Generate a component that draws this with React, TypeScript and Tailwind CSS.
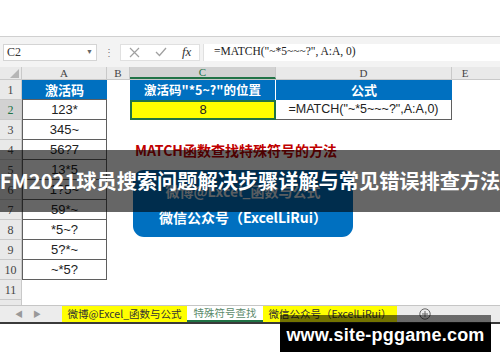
import React from "react";

const sans = "font-['Liberation_Sans','Noto_Sans_CJK_SC',sans-serif]";
const serif = "font-['Liberation_Serif','Noto_Sans_CJK_SC',serif]";
const cjk = "font-['Noto_Sans_CJK_SC','Liberation_Sans',sans-serif]";

const aVals = ["123*", "345~", "56?7", "13*5", "1?5~", "59*~", "*5~?", "5?*~", "~*5?"];

function RowHead({ n, active }: { n: string; active?: boolean }) {
  return (
    <div
      className={`w-[22px] shrink-0 h-full flex items-center justify-center border-r border-b border-[#c9c9c9] text-[12px] ${serif} ${
        active ? "bg-[#d2d2d2] text-[#217346]" : "bg-[#e9e9e9] text-[#444]"
      }`}
    >
      {n}
    </div>
  );
}

export default function App() {
  return (
    <div className={`relative w-[500px] h-[362px] overflow-hidden bg-white ${sans}`}>
      <div className="h-[36px] bg-white" />
      {/* formula bar */}
      <div className="h-[31px] bg-[#f3f3f3] border-t border-[#d0d0d0] flex items-center">
        <div className={`ml-[3px] w-[94px] h-[17px] bg-white border border-[#d4d4d4] flex items-center justify-between px-[3px] text-[12px] text-[#333] ${serif}`}>
          <span>C2</span>
          <span className="text-[7px] text-[#666]">▼</span>
        </div>
        <div className="w-[23px] text-center text-[10px] text-[#777]">⋮</div>
        <div className="w-[80px] h-[17px] bg-white border border-[#e0e0e0] flex items-center justify-around">
          <svg width="11" height="11" viewBox="0 0 11 11"><path d="M1 1L10 10M10 1L1 10" stroke="#a0a0a0" strokeWidth="1.2" fill="none" /></svg>
          <svg width="12" height="10" viewBox="0 0 12 10"><path d="M1 5L4.5 8.5L11 1" stroke="#a0a0a0" strokeWidth="1.3" fill="none" /></svg>
          <span className={`italic text-[13px] text-[#333] ${serif}`}>fx</span>
        </div>
        <div className={`ml-[3px] flex-1 h-[17px] bg-white border-l border-[#e0e0e0] flex items-center pl-[10px] text-[11.5px] text-[#222] ${serif}`}>
          =MATCH("~*5~~~?", A:A, 0)
        </div>
      </div>
      {/* column headers */}
      <div className={`flex h-[13px] bg-[#e9e9e9] text-[11px] text-[#444] ${serif} border-b border-[#c9c9c9]`}>
        <div className="w-[22px] shrink-0 border-r border-[#c9c9c9] flex items-end justify-end pr-[2px] pb-[1px]">
          <svg width="9" height="9" viewBox="0 0 9 9"><path d="M9 0V9H0Z" fill="#b5b5b5" /></svg>
        </div>
        <div className="w-[85px] shrink-0 border-r border-[#c9c9c9] flex items-center justify-center leading-none">A</div>
        <div className="w-[23px] shrink-0 border-r border-[#c9c9c9] flex items-center justify-center leading-none">B</div>
        <div className="w-[146px] shrink-0 border-r border-[#c9c9c9] bg-[#d2d2d2] text-[#217346] flex items-center justify-center leading-none border-b-2 border-b-[#217346]">C</div>
        <div className="w-[176px] shrink-0 border-r border-[#c9c9c9] flex items-center justify-center leading-none">D</div>
        <div className="flex-1 flex items-center justify-center leading-none pr-[22px]">E</div>
      </div>
      {/* row 1 */}
      <div className="flex h-[20px]">
        <RowHead n="1" />
        <div className={`w-[85px] shrink-0 bg-[#0070c0] text-white font-bold text-[13px] flex items-center justify-center ${cjk} border-b border-[#5f5f5f]`}>激活码</div>
        <div className="w-[23px] shrink-0" />
        <div className={`w-[146px] shrink-0 bg-[#0070c0] text-white font-bold text-[12.5px] flex items-center justify-center ${cjk} border-r border-white`}>激活码"*5~?"的位置</div>
        <div className={`w-[176px] shrink-0 bg-[#0070c0] text-white font-bold text-[13px] flex items-center justify-center ${cjk}`}>公式</div>
        <div className="flex-1" />
      </div>
      {/* row 2 */}
      <div className="flex h-[20px]">
        <RowHead n="2" active />
        <div className={`w-[85px] shrink-0 border-x border-b border-[#5f5f5f] text-[13px] text-[#222] flex items-center justify-center ${sans}`}>{aVals[0]}</div>
        <div className="w-[23px] shrink-0" />
        <div className="w-[146px] shrink-0 bg-[#ffff00] border-2 border-[#217346] text-[13px] text-[#222] flex items-center justify-center">8</div>
        <div className="w-[176px] shrink-0 border-r border-b border-[#5f5f5f] text-[12.5px] text-[#222] flex items-center justify-center">=MATCH("~*5~~~?",A:A,0)</div>
        <div className="flex-1" />
      </div>
      {/* rows 3-10 */}
      {aVals.slice(1).map((v, i) => (
        <div key={i} className="flex h-[20px]">
          <RowHead n={String(i + 3)} />
          <div className="w-[85px] shrink-0 border-x border-b border-[#5f5f5f] text-[13px] text-[#222] flex items-center justify-center">{v}</div>
          <div className="flex-1" />
        </div>
      ))}
      {/* row 11 */}
      <div className="flex h-[20px]">
        <RowHead n="11" />
        <div className="flex-1" />
      </div>
      <div className="flex h-[5px]">
        <div className="w-[22px] bg-[#e9e9e9] border-r border-[#c9c9c9]" />
      </div>
      {/* sheet tabs */}
      <div className={`flex h-[17px] bg-[#ececec] border-t border-[#c6c6c6] items-stretch text-[10.5px] ${cjk}`}>
        <div className="w-[62px] flex items-center gap-[10px] pl-[15px] text-[8px] text-[#999]">
          <span>◀</span>
          <span>▶</span>
        </div>
        <div className="w-[125px] bg-[#ffff00] text-[#333] flex items-center justify-center leading-none whitespace-nowrap">微博@Excel_函数与公式</div>
        <div className="w-[76px] bg-white text-[#5b8a6b] flex items-center justify-center leading-none border-b-2 border-[#217346] whitespace-nowrap">特殊符号查找</div>
        <div className="w-[134px] bg-[#ffff00] text-[#333] flex items-center justify-center leading-none whitespace-nowrap">微信公众号（ExcelLiRui）</div>
        <div className="w-[56px] flex items-center justify-center">
          <svg width="12" height="12" viewBox="0 0 12 12"><circle cx="6" cy="6" r="5.2" stroke="#666" fill="none" /><path d="M6 3V9M3 6H9" stroke="#666" /></svg>
        </div>
      </div>
      <div className="h-[2px] bg-[#3a3a3a]" />

      {/* red title text box */}
      <div className={`absolute left-[135px] top-[143px] text-[14px] font-bold text-[#c00000] leading-none ${cjk}`}>
        MATCH函数查找特殊符号的方法
      </div>
      {/* blue rounded shape */}
      <div className={`absolute left-[133px] top-[170px] w-[220px] h-[67px] bg-[#0070c0] rounded-[11px] flex flex-col items-center justify-center gap-[12px] pt-[1px] font-bold text-[14px] leading-none ${cjk}`}>
        <div className="text-[#dfe9f3]">微博@Excel_函数与公式</div>
        <div className="text-white">微信公众号（ExcelLiRui）</div>
      </div>
      {/* dark overlay band with title */}
      <div className="absolute left-0 top-[150px] w-[500px] h-[62px] bg-black/60 flex items-center justify-center">
        <div className={`text-white font-bold text-[20.2px] leading-none whitespace-nowrap ${cjk}`}>
          FM2021球员搜索问题解决步骤详解与常见错误排查方法
        </div>
      </div>
      {/* watermark */}
      <div className="absolute left-[280px] top-[315px] w-[211px] h-[37px] bg-[linear-gradient(to_bottom,rgba(0,0,0,0.55)_0px,rgba(0,0,0,0.55)_7px,#000_8px)] flex items-center justify-center pt-[4px]">
        <span className="text-white font-bold text-[18px] font-['Liberation_Sans',sans-serif] tracking-[0.2px]">www.site-pggame.com</span>
      </div>
    </div>
  );
}
